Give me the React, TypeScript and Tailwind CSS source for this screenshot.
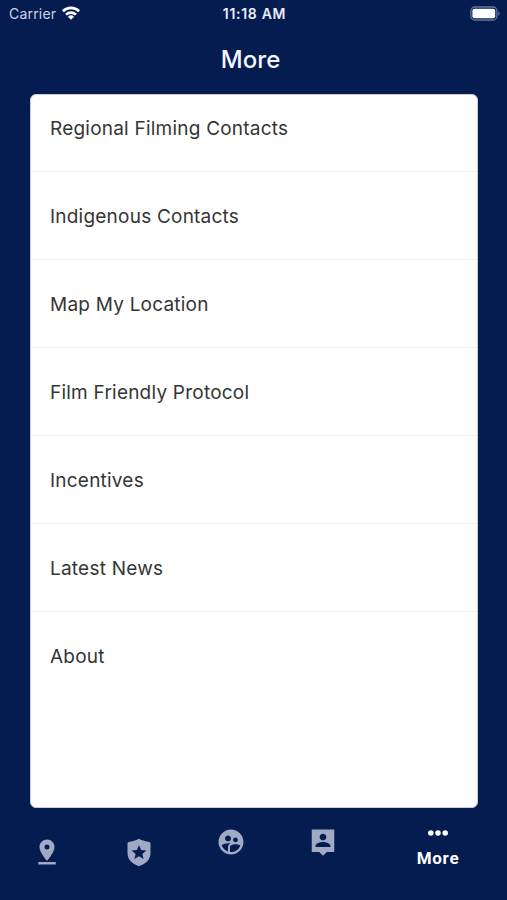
import type { ReactNode } from "react";

const items = [
  "Regional Filming Contacts",
  "Indigenous Contacts",
  "Map My Location",
  "Film Friendly Protocol",
  "Incentives",
  "Latest News",
  "About",
];

function TabIcon({ children }: { children: ReactNode }) {
  return (
    <svg viewBox="0 0 24 24" className="h-[30px] w-[30px]" fill="currentColor" fillRule="evenodd">
      {children}
    </svg>
  );
}

function StatusBar() {
  return (
    <header className="grid h-[26px] grid-cols-3 items-center pr-[7px] pl-[9px] text-[#e9edf8]">
      <div className="flex items-center gap-[6px]">
        <span className="pt-px text-[14px] tracking-[0.2px] text-[#cfd5e6]">Carrier</span>
        <svg viewBox="0 0 18 14" className="h-[14px] w-[18px]" fill="none" stroke="white" strokeWidth="2.6">
          <path d="M.9 5.2a11.6 11.6 0 0 1 16.2 0" />
          <path d="M4 8.6a7.2 7.2 0 0 1 10 0" />
          <path d="M9 13.8 5.9 10.7a4.5 4.5 0 0 1 6.2 0z" fill="white" stroke="none" />
        </svg>
      </div>
      <span className="pt-px text-center text-[14px] font-semibold tracking-[0.7px] whitespace-nowrap">11:18 AM</span>
      <svg viewBox="0 0 30 15" className="h-[15px] w-[30px] justify-self-end">
        <rect x=".9" y="1" width="26" height="13" rx="3.8" fill="none" stroke="#66749b" strokeWidth="1.3" />
        <rect x="2.4" y="2.7" width="22.8" height="9.6" rx="2" fill="white" />
        <path d="M28.3 5.2c1.8.9 1.8 3.7 0 4.6z" fill="#66749b" />
      </svg>
    </header>
  );
}

export default function App() {
  return (
    <div className="flex h-[900px] w-[507px] flex-col overflow-hidden bg-[#051c50] font-['Inter','Liberation_Sans',sans-serif]">
      <StatusBar />
      <h1 className="flex h-[68px] items-center justify-center pr-[6px] text-[24px] font-medium tracking-[0.1px] text-[#f4f6fc]">
        More
      </h1>
      <main className="mr-[29px] ml-[30px] h-[714px] rounded-[6px] border border-[#c6cde0] bg-white">
        <ul>
          {items.map((item) => (
            <li
              key={item}
              className="flex h-[88px] items-center border-b border-[#f3f4f8] pt-[3px] pl-[19px] text-[19px] tracking-[0.22px] text-[#353535] first:h-[77px] first:pt-0 first:pb-[8px] last:border-b-0 last:pt-[2px]"
            >
              {item}
            </li>
          ))}
        </ul>
      </main>
      <nav className="flex flex-1 items-start pl-[1px] text-[#a0aac4]">
        <div className="flex w-[92px] justify-center pt-[29px]">
          <TabIcon>
            <path d="M18 8c0-3.31-2.69-6-6-6S6 4.69 6 8c0 4.5 6 11 6 11s6-6.5 6-11zm-8 0a2 2 0 1 1 4 0 2 2 0 0 1-4 0zM5 20v2h14v-2H5z" />
          </TabIcon>
        </div>
        <div className="flex w-[92px] justify-center pt-[29px]">
          <TabIcon>
            <path d="M12 1.300C9.500 2.700 6.500 3.500 3.800 4 3.200 4.100 2.800 4.500 2.800 5.200V12.800C2.800 18.200 7 21.900 12 23.300c5-1.400 9.200-5.100 9.200-10.500V5.200c0-.7-.4-1.100-1-1.200C17.500 3.500 14.500 2.700 12 1.300zm0 5.200 1.700 3.900 4.200.4-3.200 2.700 1 4.100-3.700-2.200-3.700 2.200 1-4.100-3.200-2.700 4.200-.4z" />
          </TabIcon>
        </div>
        <div className="flex w-[92px] justify-center pt-[19px]">
          <TabIcon>
            <path d="M11.990 2c-5.520 0-10 4.480-10 10s4.480 10 10 10 10-4.480 10-10-4.480-10-10-10zm3.610 6.340c1.070 0 1.930.86 1.930 1.930s-.86 1.930-1.930 1.930-1.930-.86-1.930-1.930c-.01-1.070.86-1.930 1.930-1.930zm-6-1.580c1.300 0 2.360 1.060 2.360 2.360s-1.060 2.360-2.360 2.360-2.360-1.060-2.360-2.360c0-1.310 1.050-2.360 2.360-2.360zm0 9.130v3.750c-2.400-.75-4.300-2.600-5.140-4.960 1.050-1.120 3.670-1.690 5.140-1.690.53 0 1.200.08 1.900.22-1.640.87-1.900 2.020-1.900 2.680zM11.990 20c-.27 0-.53-.01-.79-.04v-4.070c0-1.420 2.940-2.130 4.400-2.130 1.070 0 2.920.39 3.840 1.150C18.280 17.880 15.390 20 11.990 20z" />
          </TabIcon>
        </div>
        <div className="flex w-[92px] justify-center pt-[19px]">
          <TabIcon>
            <path d="M21 2H3v18h6l3 3 3-3h6V2zm-9 3.300c1.490 0 2.700 1.210 2.700 2.700s-1.210 2.700-2.700 2.700S9.300 9.490 9.300 8s1.210-2.700 2.700-2.700zM18 16H6v-.9c0-2 4-3.100 6-3.100s6 1.100 6 3.100v.9z" />
          </TabIcon>
        </div>
        <div className="flex flex-1 flex-col items-center pt-[22px] text-white">
          <svg viewBox="0 0 20 6" className="h-[6px] w-[20px]" fill="currentColor">
            <circle cx="2.800" cy="3" r="2.750" />
            <circle cx="10" cy="3" r="2.750" />
            <circle cx="17.200" cy="3" r="2.750" />
          </svg>
          <span className="mt-[10px] text-[17px] leading-[24px] font-bold tracking-[0.7px] font-['Roboto','Liberation_Sans',sans-serif]">More</span>
        </div>
      </nav>
    </div>
  );
}
